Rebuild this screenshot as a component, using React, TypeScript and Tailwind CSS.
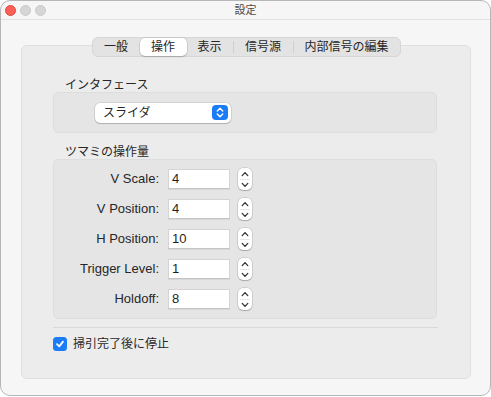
import React from "react";

const FONT = "font-['Liberation_Sans','Noto_Sans_CJK_JP',sans-serif]";

function Stepper() {
  return (
    <div className="w-[14px] h-[22px] rounded-[5px] bg-white shadow-[0_0_0_0.5px_rgba(0,0,0,0.18),0_1px_1px_rgba(0,0,0,0.18)] flex flex-col items-center justify-center gap-[2px]">
      <svg width="8" height="6" viewBox="0 0 8 6" fill="none">
        <path d="M1.2 4.6 L4 1.6 L6.8 4.6" stroke="#333" strokeWidth="1.3" strokeLinecap="round" strokeLinejoin="round" />
      </svg>
      <div className="w-[10px] h-[1px] bg-[#e6e6e6]" />
      <svg width="8" height="6" viewBox="0 0 8 6" fill="none">
        <path d="M1.2 1.4 L4 4.4 L6.8 1.4" stroke="#333" strokeWidth="1.3" strokeLinecap="round" strokeLinejoin="round" />
      </svg>
    </div>
  );
}

function Row({ label, value }: { label: string; value: string }) {
  return (
    <div className="flex items-center h-[20px]">
      <div className="w-[105px] text-right text-[13px] leading-[16px] text-[#262626]">{label}</div>
      <div className="ml-[9px] w-[62px] h-[20px] bg-white border border-[#d4d4d4] border-b-[#c4c4c4] flex items-center pl-[3px] text-[13px] text-[#1f1f1f] shadow-[0_1px_0_rgba(0,0,0,0.06)]">
        {value}
      </div>
      <div className="ml-[8px]">
        <Stepper />
      </div>
    </div>
  );
}

export default function App() {
  const tabs = [
    { t: "一般", w: "w-[47px]" },
    { t: "操作", w: "w-[47px]", sel: true },
    { t: "表示", w: "w-[46px]" },
    { sep: true },
    { t: "信号源", w: "w-[59px]" },
    { sep: true },
    { t: "内部信号の編集", w: "w-[106px]" },
  ];
  return (
    <div className={`w-[491px] h-[397px] bg-white ${FONT}`}>
      <div className="w-[491px] h-[396px] rounded-[10px] border border-[#b7b7b7] bg-[#f6f6f6] overflow-hidden flex flex-col">
        {/* title bar */}
        <div className="h-[19px] border-b border-[#e2e2e2] grid grid-cols-[1fr_auto_1fr] items-center">
          <div className="flex items-center gap-[4px] pl-[4px]">
            <div className="w-[11px] h-[11px] rounded-full bg-[#fe5f57] border border-[#e2463f]" />
            <div className="w-[11px] h-[11px] rounded-full bg-[#d6d6d6] border border-[#c8c8c8]" />
            <div className="w-[11px] h-[11px] rounded-full bg-[#d6d6d6] border border-[#c8c8c8]" />
          </div>
          <div className="text-[11px] leading-[14px] text-[#4a4a4a]">設定</div>
          <div />
        </div>

        {/* content */}
        <div className="pt-[17px] pl-[20px]">
          <div className="relative z-10 -mb-[12px] flex justify-center w-[450px]">
            <div className="flex items-center h-[20px] rounded-[6px] border border-[#d6d6d6] bg-[#e3e3e3]">
              {tabs.map((tb, i) =>
                tb.sep ? (
                  <div key={i} className="w-[1px] h-[12px] bg-[#cfcfcf]" />
                ) : (
                  <div
                    key={i}
                    className={`${tb.w} h-[18px] flex items-center justify-center text-[12px] leading-[14px] text-[#262626] ${
                      tb.sel ? "bg-white rounded-[5px] shadow-[0_0_0_0.5px_rgba(0,0,0,0.12),0_1px_1.5px_rgba(0,0,0,0.18)]" : ""
                    }`}
                  >
                    {tb.t}
                  </div>
                )
              )}
            </div>
          </div>

          <div className="w-[450px] h-[334px] rounded-[6px] border border-[#e0e0e0] bg-[#ececec] pt-[32px] pl-[31px]">
            <div className="pl-[12px] text-[12px] leading-[14px] h-[14px] text-[#262626]">インタフェース</div>
            <div className="w-[384px] h-[41px] rounded-[5px] border border-[#dedede] bg-[#e5e5e5] flex items-center pl-[41px]">
              <div className="w-[136px] h-[20px] rounded-[5px] bg-white shadow-[0_0_0_0.5px_rgba(0,0,0,0.16),0_1px_1px_rgba(0,0,0,0.16)] flex items-center justify-between pl-[8px] pr-[3px]">
                <span className="text-[12px] leading-[14px] text-[#262626]">スライダ</span>
                <div className="w-[16px] h-[15px] rounded-[4px] bg-[#1b7cf5] flex flex-col items-center justify-center gap-[1px]">
                  <svg width="8" height="5" viewBox="0 0 8 5" fill="none">
                    <path d="M1.3 4 L4 1.3 L6.7 4" stroke="white" strokeWidth="1.4" strokeLinecap="round" strokeLinejoin="round" />
                  </svg>
                  <svg width="8" height="5" viewBox="0 0 8 5" fill="none">
                    <path d="M1.3 1 L4 3.7 L6.7 1" stroke="white" strokeWidth="1.4" strokeLinecap="round" strokeLinejoin="round" />
                  </svg>
                </div>
              </div>
            </div>

            <div className="mt-[12px] pl-[12px] text-[12px] leading-[14px] h-[14px] text-[#262626]">ツマミの操作量</div>
            <div className="w-[384px] h-[160px] rounded-[5px] border border-[#dedede] bg-[#e5e5e5] pt-[9px] flex flex-col gap-[10px]">
              <Row label="V Scale:" value="4" />
              <Row label="V Position:" value="4" />
              <Row label="H Position:" value="10" />
              <Row label="Trigger Level:" value="1" />
              <Row label="Holdoff:" value="8" />
            </div>

            <div className="mt-[8px] w-[385px] h-[1px] bg-[#d9d9d9]" />

            <div className="mt-[9px] flex items-center h-[14px]">
              <div className="w-[14px] h-[14px] rounded-[3.5px] bg-[#1b7cf5] flex items-center justify-center">
                <svg width="10" height="10" viewBox="0 0 10 10" fill="none">
                  <path d="M2 5.2 L4.2 7.4 L8 2.6" stroke="white" strokeWidth="1.7" strokeLinecap="round" strokeLinejoin="round" />
                </svg>
              </div>
              <span className="ml-[6px] text-[12px] leading-[14px] text-[#262626]">掃引完了後に停止</span>
            </div>
          </div>
        </div>
      </div>
    </div>
  );
}
